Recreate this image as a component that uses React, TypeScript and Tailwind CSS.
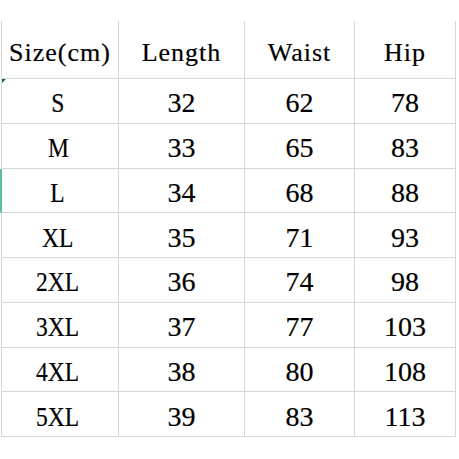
const rows = [
  ["S", "32", "62", "78"],
  ["M", "33", "65", "83"],
  ["L", "34", "68", "88"],
  ["XL", "35", "71", "93"],
  ["2XL", "36", "74", "98"],
  ["3XL", "37", "77", "103"],
  ["4XL", "38", "80", "108"],
  ["5XL", "39", "83", "113"],
];

const headers = ["Size(cm)", "Length", "Waist", "Hip"];

export default function App() {
  return (
    <div className="w-[459px] h-[459px] bg-white pt-[21px] pl-[1px] overflow-hidden">
      <div className="relative grid grid-cols-[118px_126px_110px_101px] text-black">
        {/* header */}
        {headers.map((h, i) => (
          <div
            key={h}
            className={`h-[58px] flex items-center justify-center pt-[7px] border-r border-b border-[#d6d6d6] ${
              i === 0 ? "border-l" : ""
            }`}
          >
            <span className="text-[26px] leading-none tracking-[1px] font-['Liberation_Serif',serif] whitespace-nowrap [-webkit-text-stroke:0.2px_black]">
              {h}
            </span>
          </div>
        ))}

        {/* body */}
        {rows.map((r, ri) =>
          r.map((v, ci) => (
            <div
              key={`${ri}-${ci}`}
              className={`h-[44.75px] flex items-center justify-center pt-[5px] border-r border-b border-[#d6d6d6] ${
                ci === 0
                  ? ri === 2
                    ? "border-l-2 border-l-[#5cbf98] -ml-[1px]"
                    : "border-l"
                  : ""
              }`}
            >
              <span
                className={`text-[28px] leading-none font-['Liberation_Serif',serif] [-webkit-text-stroke:0.2px_black] ${
                  ci === 0 ? "scale-x-[0.84] -translate-x-[2px]" : ""
                }`}
              >
                {v}
              </span>
            </div>
          ))
        )}

        {/* little selection marker */}
        <div className="absolute left-[1px] top-[58px] w-0 h-0 border-t-[4px] border-t-[#1f6b3a] border-r-[4px] border-r-transparent" />
      </div>
    </div>
  );
}
